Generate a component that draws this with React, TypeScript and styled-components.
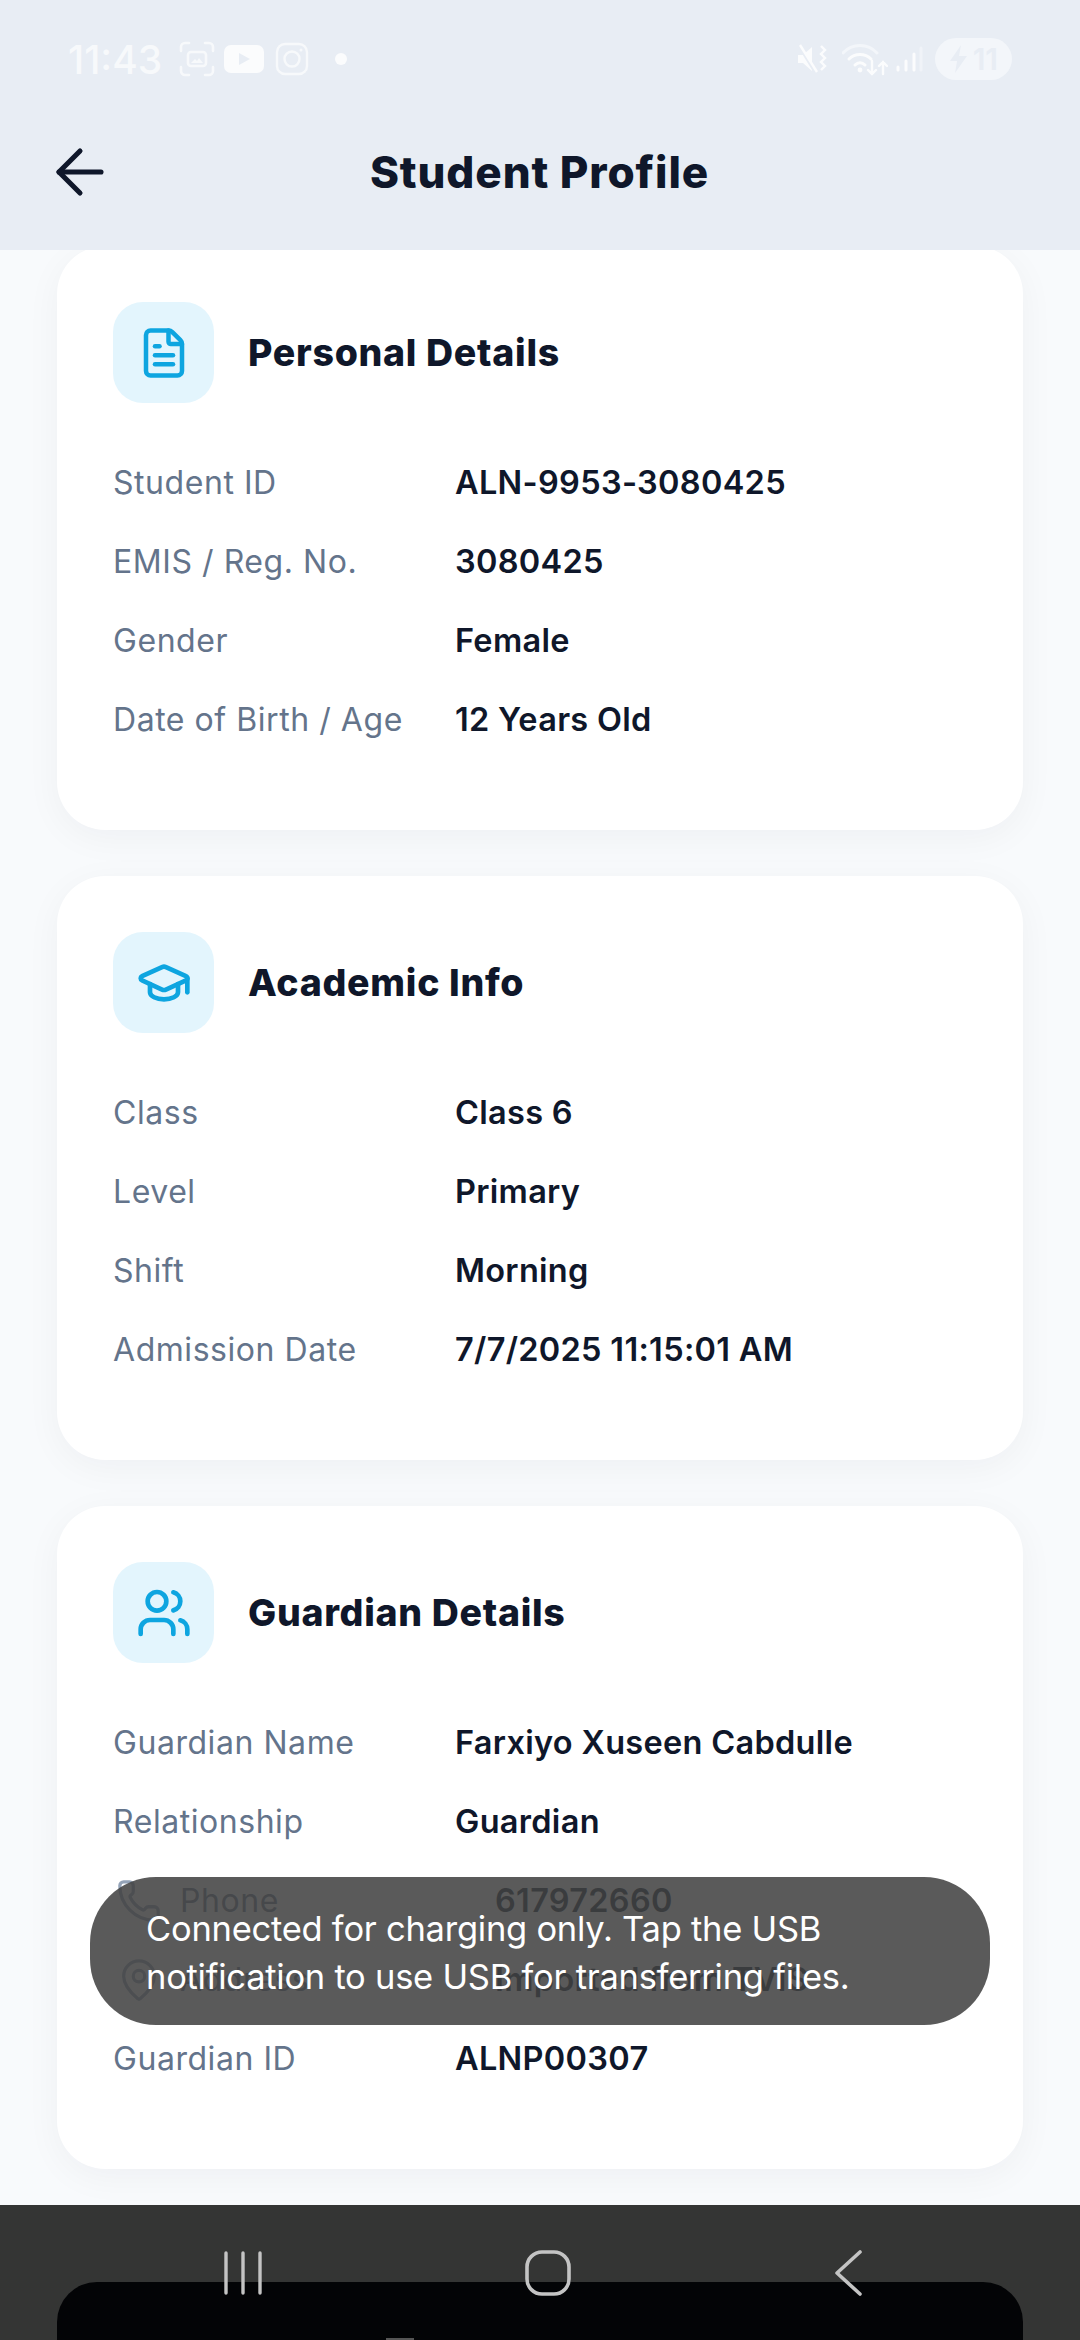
import React from 'react';
import styled, { createGlobalStyle } from 'styled-components';
import { FileText, GraduationCap, Users, Phone, MapPin, ArrowLeft } from 'lucide-react';

const GlobalStyle = createGlobalStyle`
	html, body {
		margin: 0;
		padding: 0;
		background: #f8fafc;
	}
	* {
		box-sizing: border-box;
	}
`;

const Screen = styled.div`
	position: relative;
	width: 1080px;
	height: 2340px;
	display: flex;
	flex-direction: column;
	overflow: hidden;
	font-family: Inter, 'Liberation Sans', sans-serif;
	background: #f8fafc;
`;

const TopArea = styled.header`
	position: relative;
	z-index: 2;
	height: 250px;
	flex: none;
	background: #e8edf4;
	padding: 0 68px 0 68px;
`;

const StatusBar = styled.div`
	height: 118px;
	display: flex;
	align-items: center;
	justify-content: space-between;
`;

const StatusGroup = styled.div`
	display: flex;
	align-items: center;
	color: #fff;
`;

const Time = styled.span`
	font-size: 39px;
	font-weight: 500;
	color: #f7f9fb;
	margin-right: 17px;
`;

const Battery = styled.div`
	width: 77px;
	height: 42px;
	border-radius: 21px;
	margin-left: 12px;
	background: #f3f6fa;
	color: #e8edf4;
	display: flex;
	align-items: center;
	justify-content: flex-end;
	padding-right: 14px;
	font-size: 30px;
	font-weight: 600;
	overflow: hidden;
	position: relative;
`;

const NavRow = styled.div`
	position: relative;
	display: flex;
	align-items: center;
	justify-content: center;
	height: 108px;
`;

const BackButton = styled.div`
	position: absolute;
	left: -24px;
	top: 18px;
	width: 72px;
	height: 72px;
	color: #0f172a;
`;

const Title = styled.h1`
	margin: 0 0 0 -1px;
	font-size: 44px;
	font-weight: 800;
	color: #0f172a;
	letter-spacing: 0.9px;
`;

const Scroll = styled.main`
	flex: 1;
	min-height: 0;
	overflow: hidden;
	padding: 0 57px;
	display: flex;
	flex-direction: column;
	gap: 46px;
`;

const Card = styled.section<{ $first?: boolean; $height: number }>`
	flex: none;
	height: ${(p) => p.$height}px;
	margin-top: ${(p) => (p.$first ? '-4px' : '0')};
	background: #fff;
	border-radius: 48px;
	padding: 56px 56px 0;
	box-shadow: 0 8px 36px rgba(15, 23, 42, 0.045);
`;

const CardHead = styled.div`
	display: flex;
	align-items: center;
	gap: 34px;
	margin-bottom: 40px;
`;

const IconBox = styled.div`
	width: 101px;
	height: 101px;
	border-radius: 30px;
	background: #e3f5fd;
	color: #0ea5e0;
	display: flex;
	align-items: center;
	justify-content: center;
`;

const CardTitle = styled.h2`
	margin: 0;
	font-size: 37.5px;
	font-weight: 800;
	color: #0f172a;
	letter-spacing: 0.7px;
`;

const Row = styled.div`
	display: flex;
	align-items: center;
	height: 79px;
`;

const Label = styled.div<{ $icon?: boolean }>`
	display: flex;
	align-items: center;
	gap: 18px;
	width: ${(p) => (p.$icon ? '382px' : '342px')};
	font-size: 32px;
	font-weight: 400;
	color: #64748b;
	letter-spacing: 0.55px;
`;

const Value = styled.div`
	font-size: 32.5px;
	font-weight: 600;
	color: #0f172a;
	letter-spacing: 0.3px;
	white-space: nowrap;
`;

const RowIcon = styled.span`
	display: flex;
	color: #94a3b8;
	margin-left: 3px;
`;

const Toast = styled.div`
	position: absolute;
	z-index: 3;
	left: 90px;
	top: 1877px;
	width: 900px;
	height: 148px;
	border-radius: 66px;
	background: rgba(65, 65, 66, 0.87);
	color: #fff;
	padding: 28px 0 0 56px;
	font-family: Inter, Roboto, sans-serif;
	font-size: 34.5px;
	line-height: 48px;
	font-weight: 400;
	letter-spacing: -0.25px;
`;

const NavBar = styled.footer`
	position: relative;
	flex: none;
	height: 135px;
	background: #343534;
	padding: 77px 57px 0;
`;

const Sheet = styled.div`
	height: 58px;
	border-radius: 40px 40px 0 0;
	background: #030406;
`;

const SheetHandle = styled.span`
	position: absolute;
	left: 386px;
	bottom: 0;
	width: 28px;
	height: 2px;
	background: #555;
`;

const NavIcons = styled.div`
	position: absolute;
	top: 45px;
	left: 224px;
	width: 638px;
	height: 46px;
	display: flex;
	align-items: center;
	justify-content: space-between;
`;

const Soft = styled.svg`
	display: block;
	flex: none;
`;

type RowData = { label: string; value: string; icon?: React.ReactNode };

const personal: RowData[] = [
	{ label: 'Student ID', value: 'ALN-9953-3080425' },
	{ label: 'EMIS / Reg. No.', value: '3080425' },
	{ label: 'Gender', value: 'Female' },
	{ label: 'Date of Birth / Age', value: '12 Years Old' },
];

const academic: RowData[] = [
	{ label: 'Class', value: 'Class 6' },
	{ label: 'Level', value: 'Primary' },
	{ label: 'Shift', value: 'Morning' },
	{ label: 'Admission Date', value: '7/7/2025 11:15:01 AM' },
];

const guardian: RowData[] = [
	{ label: 'Guardian Name', value: 'Farxiyo Xuseen Cabdulle' },
	{ label: 'Relationship', value: 'Guardian' },
	{ label: 'Phone', value: '617972660', icon: <Phone size={46} strokeWidth={1.7} /> },
	{ label: 'Address', value: 'Imported from TVIS', icon: <MapPin size={46} strokeWidth={1.7} /> },
	{ label: 'Guardian ID', value: 'ALNP00307' },
];

const DetailCard = ({ first, height, icon, title, rows }: {
	first?: boolean;
	height: number;
	icon: React.ReactNode;
	title: string;
	rows: RowData[];
}) => (
	<Card $first={first} $height={height}>
		<CardHead>
			<IconBox>{icon}</IconBox>
			<CardTitle>{title}</CardTitle>
		</CardHead>
		{rows.map((r) => (
			<Row key={r.label}>
				<Label $icon={!!r.icon}>
					{r.icon && <RowIcon>{r.icon}</RowIcon>}
					{r.label}
				</Label>
				<Value>{r.value}</Value>
			</Row>
		))}
	</Card>
);

const App: React.FC = () => (
	<Screen>
		<GlobalStyle />
		<TopArea>
			<StatusBar>
				<StatusGroup>
					<Time>11:43</Time>
					<Soft width="36" height="36" viewBox="0 0 36 36" fill="none" stroke="#f7f9fb" strokeWidth="2.6" strokeLinecap="round">
						<path d="M2 10V6a4 4 0 0 1 4-4h4M26 2h4a4 4 0 0 1 4 4v4M34 26v4a4 4 0 0 1-4 4h-4M10 34H6a4 4 0 0 1-4-4v-4" />
						<rect x="9" y="11" width="18" height="14" rx="3" />
						<path d="M12 22l4-4 2 2 2-3 4 5z" fill="#f7f9fb" stroke="none" />
					</Soft>
					<Soft width="40" height="28" viewBox="0 0 40 28" style={{ marginLeft: 9 }}>
						<rect width="40" height="28" rx="7" fill="#fbfcfd" />
						<path d="M15 8l11 6-11 6z" fill="#e8edf4" />
					</Soft>
					<Soft width="34" height="34" viewBox="0 0 34 34" fill="none" stroke="#f7f9fb" strokeWidth="2.4" style={{ marginLeft: 11 }}>
						<rect x="2" y="2" width="30" height="30" rx="8" />
						<circle cx="17" cy="17" r="7.5" />
						<circle cx="26" cy="8" r="1.5" fill="#f7f9fb" stroke="none" />
					</Soft>
					<Soft width="12" height="12" viewBox="0 0 12 12" style={{ marginLeft: 26 }}>
						<circle cx="6" cy="6" r="6" fill="#fbfcfd" />
					</Soft>
				</StatusGroup>
				<StatusGroup>
					<Soft width="30" height="30" viewBox="0 0 30 30" fill="none">
						<path d="M1 11h5l9-8v24l-9-8H1z" fill="#fbfcfd" />
						<path d="M2 2l16 26" stroke="#e8edf4" strokeWidth="3" />
						<path d="M3 1l17 27" stroke="#fbfcfd" strokeWidth="2.4" />
						<path d="M24 2l4 4-4 4 4 4-4 4 4 4-4 4" stroke="#fbfcfd" strokeWidth="2.4" />
					</Soft>
					<Soft width="46" height="34" viewBox="0 0 46 34" fill="none" strokeLinecap="round" style={{ marginLeft: 15 }}>
						<path d="M1 11C10 1 26 1 35 11" stroke="#f3f6fa" strokeWidth="3" />
						<path d="M7 17c6-6 16-6 22 0" stroke="#fbfcfd" strokeWidth="3" />
						<path d="M13 23c3-3 7-3 10 0" stroke="#fbfcfd" strokeWidth="3" />
						<circle cx="18" cy="28" r="2.4" fill="#fbfcfd" />
						<path d="M30 19v13M26 28l4 4 4-4M41 32V20M37 24l4-4 4 4" stroke="#fbfcfd" strokeWidth="2.4" />
					</Soft>
					<Soft width="28" height="26" viewBox="0 0 28 26" fill="none" strokeLinecap="round" strokeWidth="3" style={{ marginLeft: 7 }}>
						<path d="M3 24v-3" stroke="#fbfcfd" />
						<path d="M11 24V15" stroke="#fbfcfd" />
						<path d="M19 24V8" stroke="#fbfcfd" />
						<path d="M26 24V2" stroke="#f0f3f8" />
					</Soft>
					<Battery>
						<Soft width="22" height="30" viewBox="0 0 22 30" style={{ position: 'absolute', left: 13, top: 6 }}>
							<path d="M13 1L2 17h7l-2 12 12-17h-8z" fill="#e8edf4" />
						</Soft>
						11
					</Battery>
				</StatusGroup>
			</StatusBar>
			<NavRow>
				<BackButton>
					<ArrowLeft size={72} strokeWidth={1.7} />
				</BackButton>
				<Title>Student Profile</Title>
			</NavRow>
		</TopArea>

		<Scroll>
			<DetailCard first height={584} icon={<FileText size={54} strokeWidth={2} />} title="Personal Details" rows={personal} />
			<DetailCard height={584} icon={<GraduationCap size={56} strokeWidth={2} />} title="Academic Info" rows={academic} />
			<DetailCard height={663} icon={<Users size={56} strokeWidth={2} />} title="Guardian Details" rows={guardian} />
		</Scroll>

		<Toast>
			Connected for charging only. Tap the USB
			<br />
			notification to use USB for transferring files.
		</Toast>

		<NavBar>
			<Sheet />
			<SheetHandle />
			<NavIcons>
				<Soft width="38" height="44" viewBox="0 0 38 44" fill="none" stroke="#c4c4c4" strokeWidth="3.4" strokeLinecap="round">
					<path d="M2 2v40M19 2v40M36 2v40" />
				</Soft>
				<Soft width="46" height="46" viewBox="0 0 46 46" fill="none" stroke="#c4c4c4" strokeWidth="3.6">
					<rect x="2" y="2" width="42" height="42" rx="15" />
				</Soft>
				<Soft width="28" height="46" viewBox="0 0 28 46" fill="none" stroke="#c4c4c4" strokeWidth="3.6" strokeLinecap="round" strokeLinejoin="round">
					<path d="M26 2L3 23l23 21" />
				</Soft>
			</NavIcons>
		</NavBar>
	</Screen>
);

export default App;
